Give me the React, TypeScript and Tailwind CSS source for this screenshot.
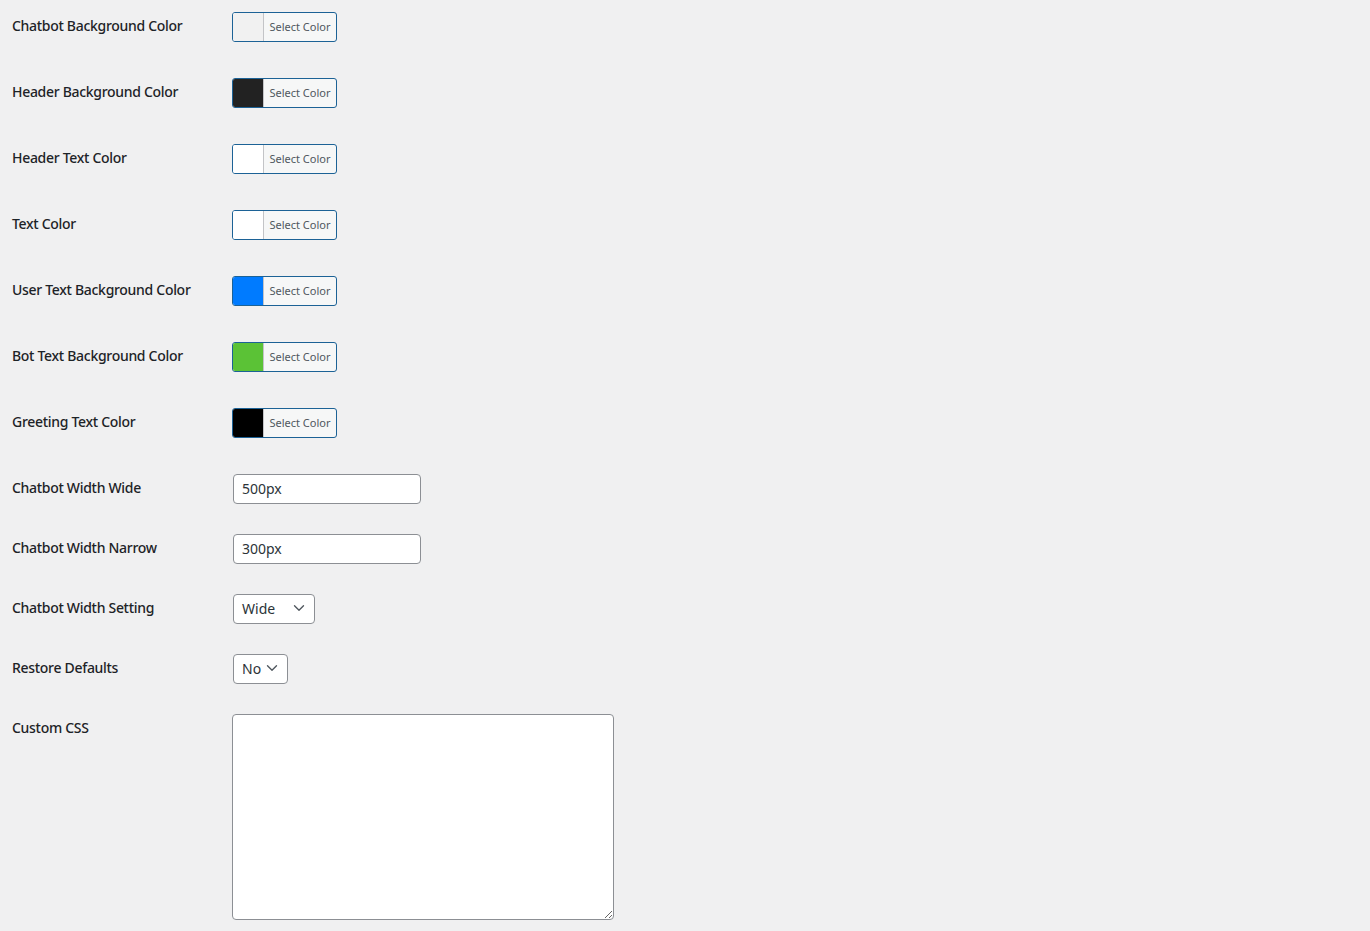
import { ChevronDown } from "lucide-react";

const colorRows = [
  { label: "Chatbot Background Color", color: "#f1f1f1" },
  { label: "Header Background Color", color: "#222222" },
  { label: "Header Text Color", color: "#ffffff" },
  { label: "Text Color", color: "#ffffff" },
  { label: "User Text Background Color", color: "#007bff" },
  { label: "Bot Text Background Color", color: "#5bc236" },
  { label: "Greeting Text Color", color: "#000000" },
];

function Label({ children }: { children: string }) {
  return (
    <div className="w-[220px] shrink-0 pt-[17px] text-[14px] leading-[18px] font-medium tracking-[-0.3px] text-[#1d2327]">
      {children}
    </div>
  );
}

function ColorButton({ color }: { color: string }) {
  return (
    <button
      type="button"
      className="mt-[12px] flex h-[30px] w-[105px] overflow-hidden rounded-[3px] border border-[#1c6296] bg-[#f6f7f7] p-0"
    >
      <span className="h-full w-[30px] shrink-0" style={{ backgroundColor: color }} />
      <span className="flex h-full flex-1 items-center justify-center border-l border-[#c3c4c7] text-[11px] text-[#50575e]">
        Select Color
      </span>
    </button>
  );
}

function Select({ value, width }: { value: string; width: string }) {
  return (
    <div
      className={`mt-[12px] ml-px flex h-[30px] items-center justify-between rounded-[4px] border border-[#8c8f94] bg-white pb-[2px] pl-[8px] pr-[6px] text-[14px] text-[#2c3338] ${width}`}
    >
      <span>{value}</span>
      <ChevronDown className="h-[18px] w-[18px] text-[#50575e]" strokeWidth={1.8} />
    </div>
  );
}

export default function App() {
  return (
    <div
      className="min-h-[931px] bg-[#f0f0f1] pl-[12px]"
      style={{ fontFamily: '"Noto Sans", "Open Sans", Arial, sans-serif' }}
    >
      {colorRows.map((r) => (
        <div key={r.label} className="flex h-[66px]">
          <Label>{r.label}</Label>
          <ColorButton color={r.color} />
        </div>
      ))}

      <div className="flex h-[60px]">
        <Label>Chatbot Width Wide</Label>
        <input
          defaultValue="500px"
          className="mt-[12px] ml-px h-[30px] w-[188px] rounded-[4px] border border-[#8c8f94] bg-white px-[8px] pb-px text-[14px] text-[#2c3338] outline-none"
        />
      </div>
      <div className="flex h-[60px]">
        <Label>Chatbot Width Narrow</Label>
        <input
          defaultValue="300px"
          className="mt-[12px] ml-px h-[30px] w-[188px] rounded-[4px] border border-[#8c8f94] bg-white px-[8px] pb-px text-[14px] text-[#2c3338] outline-none"
        />
      </div>
      <div className="flex h-[60px]">
        <Label>Chatbot Width Setting</Label>
        <Select value="Wide" width="w-[82px]" />
      </div>
      <div className="flex h-[60px]">
        <Label>Restore Defaults</Label>
        <Select value="No" width="w-[55px]" />
      </div>
      <div className="flex">
        <Label>Custom CSS</Label>
        <textarea className="mt-[12px] h-[206px] w-[382px] rounded-[4px] border border-[#8c8f94] bg-white outline-none" />
      </div>
    </div>
  );
}
